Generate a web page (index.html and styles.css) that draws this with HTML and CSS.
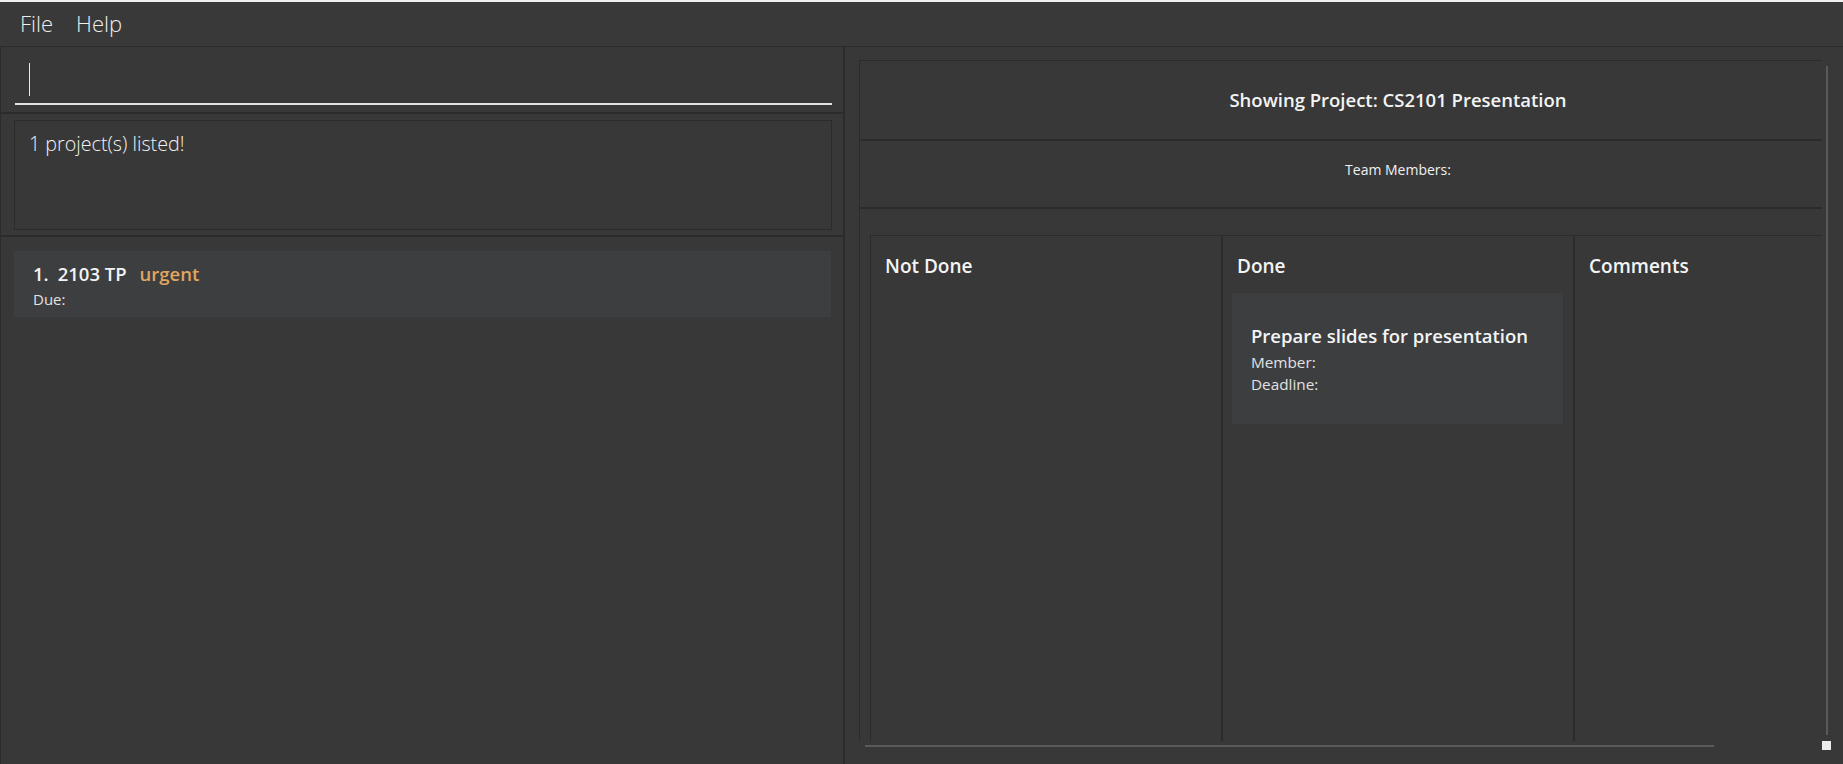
FILE: index.html
```html
<!DOCTYPE html>
<html>
<head>
<meta charset="utf-8">
<link rel="stylesheet" href="styles.css">
</head>
<body>
<div class="window">
  <div class="topline"></div>
  <div class="menubar">
    <span class="menu-item">File</span>
    <span class="menu-item">Help</span>
  </div>
  <div class="main">
    <div class="left">
      <div class="cmd">
        <div class="cmd-field"><span class="caret"></span></div>
      </div>
      <div class="result">
        <div class="result-box">1 project(s) listed!</div>
      </div>
      <div class="list">
        <div class="project-card">
          <div class="project-title"><span class="idx">1.</span><span class="pname">2103 TP</span><span class="tag">urgent</span></div>
          <div class="project-due">Due:</div>
        </div>
      </div>
    </div>
    <div class="right">
      <div class="viewport">
        <div class="detail">
          <div class="detail-header">Showing Project: CS2101 Presentation</div>
          <div class="detail-team">Team Members:</div>
          <div class="detail-gap"></div>
          <div class="columns">
            <div class="column">
              <div class="col-title">Not Done</div>
            </div>
            <div class="column">
              <div class="col-title">Done</div>
              <div class="task-card">
                <div class="task-title">Prepare slides for presentation</div>
                <div class="task-line">Member:</div>
                <div class="task-line">Deadline:</div>
              </div>
            </div>
            <div class="column">
              <div class="col-title">Comments</div>
            </div>
          </div>
        </div>
      </div>
      <div class="vscroll"></div>
      <div class="hscroll"></div>
      <div class="corner"></div>
    </div>
  </div>
</div>
</body>
</html>
```

FILE: styles.css
```css
html, body {
  margin: 0;
  padding: 0;
  background: #383838;
  overflow: hidden;
}
.window {
  width: 1843px;
  height: 764px;
  display: flex;
  flex-direction: column;
  font-family: "Open Sans", "Noto Sans", sans-serif;
  color: #ffffff;
}
.topline {
  height: 2px;
  background: #f0f0f0;
  flex: none;
}
.menubar {
  height: 44px;
  flex: none;
  border-bottom: 1px solid #2b2b2b;
  display: flex;
  align-items: center;
  padding-left: 20px;
  gap: 23px;
  background: #393939;
}
.menu-item {
  font-size: 22px;
  font-weight: 300;
  color: #eeeeee;
  line-height: 1;
  margin-top: -2px;
}
.main {
  flex: 1;
  display: flex;
  min-height: 0;
}
.left {
  width: 845px;
  flex: none;
  box-sizing: border-box;
  border-left: 1px solid #2b2b2b;
  border-right: 2px solid #2b2b2b;
  display: flex;
  flex-direction: column;
}
.cmd {
  height: 67px;
  box-sizing: border-box;
  border-bottom: 2px solid #2b2b2b;
  padding: 11px 10px 0 14px;
}
.cmd-field {
  width: 817px;
  height: 47px;
  box-sizing: border-box;
  border-bottom: 2px solid #e2e2e2;
  padding: 5px 0 0 14px;
}
.caret {
  display: block;
  width: 1px;
  height: 33px;
  background: #e8e8e8;
}
.result {
  height: 123px;
  box-sizing: border-box;
  border-bottom: 2px solid #2b2b2b;
  padding: 6px 0 0 13px;
}
.result-box {
  width: 818px;
  height: 110px;
  box-sizing: border-box;
  border: 1px solid #2b2b2b;
  padding: 10px 0 0 14px;
  font-size: 19.7px;
  font-weight: 300;
  color: #f2f2f2;
  line-height: 26px;
}
.list {
  flex: 1;
  padding: 14px 0 0 13px;
}
.project-card {
  width: 817px;
  height: 66px;
  box-sizing: border-box;
  background: #3c3e40;
  padding: 11px 0 0 19px;
}
.project-title {
  font-size: 18.5px;
  font-weight: 600;
  line-height: 24px;
  color: #f4f4f4;
}
.idx { margin-right: 9px; }
.pname { margin-right: 13px; }
.tag { color: #e1a560; }
.project-due {
  font-size: 15px;
  color: #e2e2e2;
  line-height: 20px;
  margin-top: 3px;
}
.right {
  flex: 1;
  position: relative;
  padding: 13px 0 0 14px;
  box-sizing: border-box;
}
.viewport {
  width: 963px;
  height: 681px;
  overflow: hidden;
}
.detail {
  width: 1200px;
  height: 100%;
  box-sizing: border-box;
  border-left: 1px solid #2b2b2b;
  border-top: 1px solid #2b2b2b;
  display: flex;
  flex-direction: column;
}
.detail-header {
  width: 962px;
  height: 80px;
  box-sizing: border-box;
  border-bottom: 2px solid #2b2b2b;
  display: flex;
  align-items: center;
  justify-content: center;
  font-size: 18.5px;
  font-weight: 600;
  color: #f4f4f4;
  padding-left: 114px;
  padding-bottom: 1px;
}
.detail-team {
  width: 962px;
  height: 68px;
  box-sizing: border-box;
  border-bottom: 2px solid #2b2b2b;
  display: flex;
  align-items: center;
  justify-content: center;
  font-size: 14px;
  color: #f0f0f0;
  padding-left: 114px;
  padding-bottom: 10px;
}
.detail-gap {
  height: 26px;
  flex: none;
}
.columns {
  flex: 1;
  margin-left: 10px;
  display: flex;
  border-top: 1px solid #2b2b2b;
  border-left: 1px solid #2b2b2b;
}
.column {
  width: 352px;
  flex: none;
  box-sizing: border-box;
  border-right: 2px solid #2b2b2b;
  padding: 17px 0 0 0;
}
.col-title {
  font-size: 19px;
  font-weight: 600;
  color: #f4f4f4;
  padding-left: 14px;
  line-height: 26px;
}
.task-card {
  margin: 14px 10px 0 9px;
  height: 131px;
  box-sizing: border-box;
  background: #3c3e40;
  padding: 30px 0 0 19px;
}
.task-title {
  font-size: 18.5px;
  font-weight: 600;
  color: #f4f4f4;
  line-height: 26px;
}
.task-line {
  font-size: 15.3px;
  color: #e2e2e2;
  line-height: 22px;
}
.task-title + .task-line { margin-top: 2px; }
.vscroll {
  position: absolute;
  left: 981px;
  top: 19px;
  width: 2px;
  height: 669px;
  background: #5a5a5a;
}
.hscroll {
  position: absolute;
  left: 20px;
  top: 698px;
  width: 849px;
  height: 2px;
  background: #5a5a5a;
}
.corner {
  position: absolute;
  left: 977px;
  top: 694px;
  width: 9px;
  height: 9px;
  background: #ececec;
}
```
